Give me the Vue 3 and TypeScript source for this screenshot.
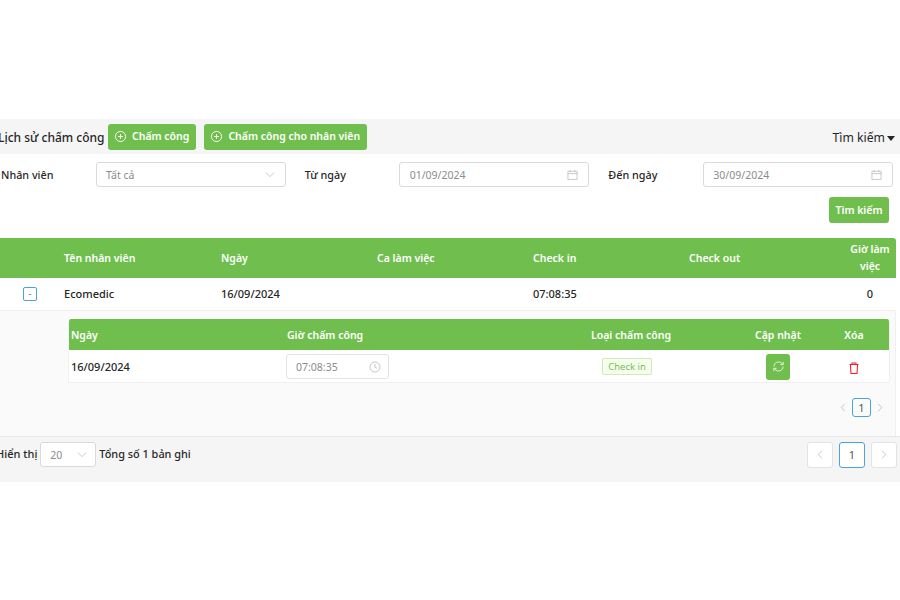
<script setup lang="ts">
const columns: string[] = ['Tên nhân viên', 'Ngày', 'Ca làm việc', 'Check in', 'Check out']
</script>

<template>
  <div class="page">
    <div class="titlebar">
      <span class="title">Lịch sử chấm công</span>
      <button class="btn btn-icon">
        <svg class="plus" viewBox="0 0 14 14"><circle cx="7" cy="7" r="5.5" /><path d="M7 4.5v5M4.5 7h5" /></svg>
        Chấm công
      </button>
      <button class="btn btn-icon second">
        <svg class="plus" viewBox="0 0 14 14"><circle cx="7" cy="7" r="5.5" /><path d="M7 4.5v5M4.5 7h5" /></svg>
        Chấm công cho nhân viên
      </button>
      <span class="toggle">Tìm kiếm<i class="caret"></i></span>
    </div>

    <div class="filters">
      <div class="filter-row">
        <div class="field">
          <label>Nhân viên</label>
          <div class="control">
            <span>Tất cả</span>
            <svg class="chev" viewBox="0 0 12 8"><path d="M1 1.5l5 5 5-5" /></svg>
          </div>
        </div>
        <div class="field wide">
          <label>Từ ngày</label>
          <div class="control">
            <span>01/09/2024</span>
            <svg class="cal" viewBox="0 0 12 12"><path d="M1 2.5h10v9H1zM1 5h10M3.5 1v2.5M8.5 1v2.5" /></svg>
          </div>
        </div>
        <div class="field">
          <label>Đến ngày</label>
          <div class="control">
            <span>30/09/2024</span>
            <svg class="cal" viewBox="0 0 12 12"><path d="M1 2.5h10v9H1zM1 5h10M3.5 1v2.5M8.5 1v2.5" /></svg>
          </div>
        </div>
      </div>
      <div class="search-row"><button class="btn">Tìm kiếm</button></div>
    </div>

    <div class="table">
      <div class="thead grid-main">
        <span></span>
        <span v-for="c in columns" :key="c">{{ c }}</span>
        <span class="center">Giờ làm việc</span>
      </div>
      <div class="trow grid-main">
        <span class="expand-cell"><i class="expand">-</i></span>
        <span>Ecomedic</span>
        <span>16/09/2024</span>
        <span></span>
        <span>07:08:35</span>
        <span></span>
        <span class="center">0</span>
      </div>
      <div class="expanded">
        <div class="nested">
          <div class="nhead grid-sub">
            <span>Ngày</span>
            <span>Giờ chấm công</span>
            <span class="center">Loại chấm công</span>
            <span class="center">Cập nhật</span>
            <span class="center">Xóa</span>
          </div>
          <div class="nrow grid-sub">
            <span>16/09/2024</span>
            <span>
              <span class="time">
                <span>07:08:35</span>
                <svg class="clock" viewBox="0 0 12 12"><circle cx="6" cy="6" r="5" /><path d="M6 3v3.2l2 1.2" /></svg>
              </span>
            </span>
            <span class="center"><em class="tag">Check in</em></span>
            <span class="center">
              <button class="sync" aria-label="Cập nhật">
                <svg viewBox="0 0 14 14"><path d="M2 7a5 5 0 0 1 8.6-3.4L12 5M12 7a5 5 0 0 1-8.6 3.4L2 9M12 2v3H9M2 12V9h3" /></svg>
              </button>
            </span>
            <span class="center">
              <svg class="trash" viewBox="0 0 10 12"><path d="M.5 2.5h9M3 2.5V1h4v1.5M1.4 2.5l.6 9h6l.6-9" /></svg>
            </span>
          </div>
        </div>
        <div class="inner-pager">
          <svg class="pg" viewBox="0 0 8 12"><path d="M6 2L2 6l4 4" /></svg>
          <span class="pg-num">1</span>
          <svg class="pg" viewBox="0 0 8 12"><path d="M2 2l4 4-4 4" /></svg>
        </div>
      </div>
    </div>

    <div class="footer">
      <span class="shown">Hiển thị</span>
      <span class="size">
        <span>20</span>
        <svg class="chev" viewBox="0 0 12 8"><path d="M1 1.5l5 5 5-5" /></svg>
      </span>
      <span class="total">Tổng số 1 bản ghi</span>
      <div class="pager">
        <span class="box"><svg class="pg" viewBox="0 0 8 12"><path d="M6 2L2 6l4 4" /></svg></span>
        <span class="box active">1</span>
        <span class="box"><svg class="pg" viewBox="0 0 8 12"><path d="M2 2l4 4-4 4" /></svg></span>
      </div>
    </div>
  </div>
</template>

<style scoped>
.page {
  width: 900px;
  height: 600px;
  box-sizing: border-box;
  padding-top: 119px;
  background: #fff;
  overflow: hidden;
  font-family: "Noto Sans", "Open Sans", sans-serif;
  font-size: 11px;
  color: #262626;
}
.titlebar {
  height: 35px;
  background: #f5f5f5;
  display: flex;
  align-items: center;
  padding: 0 5px 0 0;
  box-sizing: border-box;
}
.title {
  font-size: 12px;
  font-weight: 500;
  margin-left: -2px;
  width: 110px;
  white-space: nowrap;
  padding-top: 2px;
}
.btn {
  height: 26px;
  border: 0;
  border-radius: 3px;
  background: #70bf4e;
  color: #fff;
  font: 600 10.5px "Noto Sans", "Open Sans", sans-serif;
  padding: 0 6px;
  display: inline-flex;
  align-items: center;
  gap: 5px;
  white-space: nowrap;
}
.btn-icon { padding: 0 7px 2px 6px; }
.btn-icon .plus { margin-top: 2px; }
.second { margin-left: 8px; }
.plus {
  width: 13px;
  height: 13px;
  fill: none;
  stroke: #fff;
  stroke-width: 1;
}
.toggle {
  margin-left: auto;
  font-size: 12.2px;
  display: inline-flex;
  align-items: center;
  gap: 2px;
  padding-top: 2px;
}
.caret {
  width: 0;
  height: 0;
  border-left: 4.5px solid transparent;
  border-right: 4.5px solid transparent;
  border-top: 5px solid #262626;
  margin-top: 2px;
}
.filters {
  height: 80px;
  box-sizing: border-box;
  padding: 8px 7px 0 1px;
}
.filter-row {
  display: flex;
  gap: 19px;
}
.field {
  display: flex;
  align-items: center;
  width: 285px;
}
.field.wide label { width: 94px; }
.field.wide .control { padding-left: 10px; }
.field label {
  width: 95px;
  flex: none;
  font-weight: 500;
  font-size: 10.8px;
}
.control {
  flex: 1;
  height: 25px;
  box-sizing: border-box;
  border: 1px solid #d9d9d9;
  border-radius: 3px;
  padding: 0 10px 0 9px;
  display: flex;
  align-items: center;
  justify-content: space-between;
  color: #8c8c8c;
  font-size: 10.5px;
}
.chev {
  width: 10px;
  height: 7px;
  fill: none;
  stroke: #bfbfbf;
  stroke-width: 1;
}
.cal {
  width: 11px;
  height: 11px;
  fill: none;
  stroke: #bfbfbf;
  stroke-width: 0.9;
}
.search-row {
  display: flex;
  justify-content: flex-end;
  margin-top: 10px;
  padding-right: 4px;
}
.search-row .btn { width: 60px; justify-content: center; padding: 0; }

.table {
  margin-top: 4px;
  width: 896px;
}
.grid-main {
  display: grid;
  grid-template-columns: 56px 157px 156px 156px 156px 156px 59px;
}
.grid-main > span { padding-left: 8px; }
.grid-main > .center { padding: 0 5px 0 12px; text-align: center; }
.thead {
  height: 40px;
  background: #70bf4e;
  color: #fff;
  font-weight: 600;
  font-size: 10.5px;
  align-items: center;
  border-radius: 0 3px 0 0;
  line-height: 17px;
}
.trow {
  height: 33px;
  padding-bottom: 1px;
  align-items: center;
  font-weight: 500;
  font-size: 11px;
  border-bottom: 1px solid #f0f0f0;
  box-sizing: border-box;
}
.grid-main > .expand-cell {
  padding: 0 0 0 23px;
  display: flex;
}
.expand {
  width: 12px;
  height: 12px;
  border: 1px solid #4aa3df;
  border-radius: 2px;
  font-style: normal;
  font-size: 9px;
  line-height: 11px;
  text-align: center;
  color: #777;
  display: block;
}
.expanded {
  height: 125px;
  box-sizing: border-box;
  background: #fafafa;
  border-right: 1px solid #f0f0f0;
  padding: 8px 5px 0 68px;
}
.nested {
  background: #fff;
  border-radius: 3px 3px 0 0;
  border: 1px solid #f0f0f0;
  border-top: 0;
  overflow: hidden;
}
.grid-sub {
  display: grid;
  grid-template-columns: 216px 254px 180px 114px 38px;
  padding-left: 2px;
  align-items: center;
}
.grid-sub .center { text-align: center; }
.nhead {
  height: 31px;
  background: #70bf4e;
  color: #fff;
  font-weight: 600;
  font-size: 10.5px;
}
.nrow {
  height: 32px;
  font-weight: 500;
  font-size: 11px;
  padding-top: 1px;
  box-sizing: border-box;
}
.time {
  display: inline-flex;
  align-items: center;
  justify-content: space-between;
  width: 103px;
  height: 25px;
  box-sizing: border-box;
  margin-left: -1px;
  border: 1px solid #e3e3e3;
  border-radius: 3px;
  padding: 0 7px 0 9px;
  color: #8c8c8c;
  font-weight: 400;
  font-size: 10.5px;
  vertical-align: middle;
}
.clock {
  width: 12px;
  height: 12px;
  fill: none;
  stroke: #bfbfbf;
  stroke-width: 0.9;
}
.tag {
  display: inline-block;
  font-style: normal;
  font-weight: 400;
  font-size: 9.5px;
  line-height: 15px;
  color: #70bf4e;
  background: #f6ffed;
  border: 1px solid #cdeab8;
  border-radius: 2px;
  padding: 0 5px;
  margin-right: 8px;
}
.sync {
  width: 24px;
  height: 26px;
  border: 0;
  border-radius: 3px;
  background: #70bf4e;
  padding: 0;
  display: inline-flex;
  align-items: center;
  justify-content: center;
  vertical-align: middle;
}
.sync svg {
  width: 13px;
  height: 13px;
  fill: none;
  stroke: #e6f5de;
  stroke-width: 1;
}
.trash {
  width: 10px;
  height: 12px;
  fill: none;
  stroke: #f5222d;
  stroke-width: 1.1;
  vertical-align: middle;
}
.inner-pager {
  display: flex;
  justify-content: flex-end;
  align-items: center;
  gap: 5px;
  margin-top: 15px;
  padding-right: 6px;
}
.pg {
  width: 8px;
  height: 11px;
  fill: none;
  stroke: #bfbfbf;
  stroke-width: 1;
}
.pg-num {
  width: 19px;
  height: 19px;
  box-sizing: border-box;
  border: 1px solid #4aa3df;
  border-radius: 3px;
  text-align: center;
  line-height: 17px;
  color: #555;
}
.footer {
  height: 46px;
  box-sizing: border-box;
  border-top: 1px solid #e8e8e8;
  background: #f5f5f5;
  display: flex;
  align-items: center;
  padding: 0 3px 10px 0;
  font-weight: 500;
  font-size: 11px;
}
.footer > span:not(.size) { margin-top: -2px; }
.shown { margin-left: -4px; }
.total { font-size: 10.9px; }
.size {
  width: 56px;
  height: 25px;
  box-sizing: border-box;
  margin: 0 3px;
  background: #fff;
  border: 1px solid #d9d9d9;
  border-radius: 3px;
  padding: 0 8px 0 9px;
  display: flex;
  align-items: center;
  justify-content: space-between;
  color: #8c8c8c;
  font-weight: 400;
  font-size: 10.5px;
}
.pager {
  margin-left: auto;
  display: flex;
  gap: 6px;
}
.box {
  width: 26px;
  height: 26px;
  box-sizing: border-box;
  background: #fff;
  border: 1px solid #e3e3e3;
  border-radius: 3px;
  display: flex;
  align-items: center;
  justify-content: center;
  color: #555;
  font-weight: 400;
  font-size: 11px;
}
.box.active { border-color: #4aa3df; }
</style>
